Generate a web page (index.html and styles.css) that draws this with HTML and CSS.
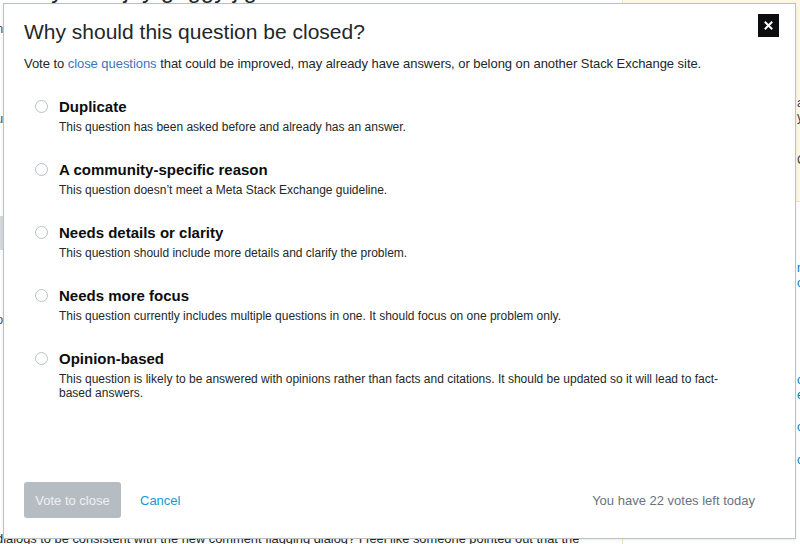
FILE: index.html
```html
<!DOCTYPE html>
<html lang="en">
<head>
<meta charset="utf-8">
<title>Why should this question be closed?</title>
<link rel="stylesheet" href="styles.css">
</head>
<body>
<div class="page">
  <div class="main">
    <div class="q-head">Do you enjoy gaggy jig</div>
    <div class="q-body">
      <p class="frag">h</p>
      <p class="frag">i</p>
      <p class="frag">u</p>
      <div class="frag-box"></div>
      <p class="frag frag-low">o</p>
    </div>
    <p class="tail">dialogs to be consistent with the new comment flagging dialog? I feel like someone pointed out that the</p>
  </div>
  <aside class="side">
    <div class="side-note">
      <p>gaging ways to get highlighted quickly</p>
      <p>a</p>
      <p>y</p>
      <p class="side-c">C</p>
    </div>
    <ul class="side-links">
      <li>n</li>
      <li>o</li>
      <li>o</li>
      <li>e</li>
      <li>o</li>
      <li>c</li>
    </ul>
  </aside>
</div>

<div class="modal" role="dialog" aria-labelledby="modal-title">
  <h1 class="modal-title" id="modal-title">Why should this question be closed?</h1>
  <button class="modal-close" aria-label="Close">
    <svg width="9" height="9" viewBox="0 0 9 9" aria-hidden="true"><path d="M1.5 1.5 L7.5 7.5 M7.5 1.5 L1.5 7.5" stroke="#fff" stroke-width="2" stroke-linecap="square"/></svg>
  </button>
  <p class="modal-desc">Vote to <a class="link" href="#">close questions</a> that could be improved, may already have answers, or belong on another Stack Exchange site.</p>

  <ul class="reasons">
    <li class="reason">
      <span class="radio"></span>
      <div class="reason-text">
        <div class="reason-label">Duplicate</div>
        <div class="reason-desc">This question has been asked before and already has an answer.</div>
      </div>
    </li>
    <li class="reason">
      <span class="radio"></span>
      <div class="reason-text">
        <div class="reason-label">A community-specific reason</div>
        <div class="reason-desc">This question doesn’t meet a Meta Stack Exchange guideline.</div>
      </div>
    </li>
    <li class="reason">
      <span class="radio"></span>
      <div class="reason-text">
        <div class="reason-label">Needs details or clarity</div>
        <div class="reason-desc">This question should include more details and clarify the problem.</div>
      </div>
    </li>
    <li class="reason">
      <span class="radio"></span>
      <div class="reason-text">
        <div class="reason-label">Needs more focus</div>
        <div class="reason-desc">This question currently includes multiple questions in one. It should focus on one problem only.</div>
      </div>
    </li>
    <li class="reason">
      <span class="radio"></span>
      <div class="reason-text">
        <div class="reason-label">Opinion-based</div>
        <div class="reason-desc">This question is likely to be answered with opinions rather than facts and citations. It should be updated so it will lead to fact-based answers.</div>
      </div>
    </li>
  </ul>

  <div class="modal-footer">
    <button class="btn-vote" disabled>Vote to close</button>
    <a class="btn-cancel" href="#">Cancel</a>
    <span class="votes-left">You have 22 votes left today</span>
  </div>
</div>
</body>
</html>
```

FILE: styles.css
```css
* { box-sizing: border-box; }

html, body {
  margin: 0;
  padding: 0;
  width: 800px;
  height: 544px;
  overflow: hidden;
  background: #ffffff;
  font-family: "Liberation Sans", Arial, sans-serif;
  color: #242729;
}

/* ---------- underlying page ---------- */
.page {
  display: flex;
  height: 544px;
}

.main {
  flex: none;
  width: 622px;
  display: flex;
  flex-direction: column;
  height: 544px;
}

.q-head {
  font-size: 24px;
  line-height: 28px;
  margin-top: -24px;
  padding-left: 14px;
  color: #242729;
  white-space: nowrap;
}

.q-body {
  flex: 1;
  padding-top: 17px;
  margin-left: -4px;
  font-size: 13px;
  line-height: 15px;
  color: #555;
}

.frag { margin: 0 0 30px 0; }

.frag-box {
  width: 10px;
  height: 34px;
  margin-top: 90px;
  background: #d6d9dc;
}

.frag-low { margin-top: 62px; }

.tail {
  margin: 0 0 -4px -4px;
  font-size: 12.85px;
  line-height: 18px;
  white-space: nowrap;
  color: #242729;
}

.side {
  flex: 1;
  min-width: 0;
  border-left: 1px solid #f1e5bc;
}

.side-note {
  background: #fdf7e3;
  border-bottom: 1px solid #f1e5bc;
  margin-top: -40px;
  height: 242px;
  padding: 4px 0 0 174px;
  font-size: 12px;
  line-height: 14px;
  color: #3b4045;
}

.side-note p { margin: 0; white-space: nowrap; }
.side-note p:first-child { margin-left: -160px; margin-bottom: 118px; }
.side-c { margin-top: 29px !important; }

.side-links {
  list-style: none;
  margin: 0;
  padding: 59px 0 0 174px;
  font-size: 12px;
  line-height: 15px;
  color: #0077cc;
}

.side-links li:nth-child(2) { margin-bottom: 82px; }
.side-links li:nth-child(4) { margin-bottom: 17px; }
.side-links li:nth-child(5) { margin-bottom: 18px; }

/* ---------- modal ---------- */
.modal {
  position: absolute;
  left: 3px;
  top: 3px;
  width: 793px;
  height: 536px;
  background: #ffffff;
  border: 1px solid #bbc0c4;
  box-shadow: 0 1px 3px rgba(0, 0, 0, 0.08);
  display: flex;
  flex-direction: column;
  padding: 15px 40px 20px 20px;
}

.modal-title {
  margin: 0;
  font-size: 21px;
  line-height: 26px;
  font-weight: normal;
  color: #242729;
}

.modal-close {
  position: absolute;
  top: 10px;
  right: 16px;
  width: 21px;
  height: 23px;
  border: 0;
  padding: 0;
  background: #0c0d0e;
  display: flex;
  align-items: center;
  justify-content: center;
}

.modal-desc {
  margin: 10px 0 0 0;
  font-size: 13px;
  line-height: 17px;
  color: #242729;
  white-space: nowrap;
  letter-spacing: -0.05px;
}

.link {
  color: #3d72c6;
  text-decoration: none;
}

.reasons {
  list-style: none;
  margin: 25px 0 0 0;
  padding: 0 0 0 11px;
  display: flex;
  flex-direction: column;
  gap: 26px;
}

.reason {
  display: flex;
  align-items: flex-start;
  gap: 11px;
}

.radio {
  flex: none;
  width: 13px;
  height: 13px;
  margin-top: 3px;
  border: 1px solid #bbc0c4;
  border-radius: 50%;
  background: #fff;
}

.reason-label {
  font-size: 15px;
  line-height: 19px;
  font-weight: bold;
  color: #0c0d0e;
}

.reason-desc {
  margin-top: 4px;
  font-size: 12px;
  line-height: 14px;
  color: #242729;
  max-width: 660px;
}

.modal-footer {
  margin-top: auto;
  display: flex;
  align-items: center;
}

.btn-vote {
  width: 97px;
  height: 36px;
  border: 0;
  border-radius: 3px;
  background: #b6bdc2;
  color: #eef0f1;
  font-family: "Liberation Sans", Arial, sans-serif;
  font-size: 13px;
  padding: 0;
}

.btn-cancel {
  margin-left: 19px;
  font-size: 13px;
  color: #1a98d5;
  text-decoration: none;
}

.votes-left {
  margin-left: auto;
  font-size: 13px;
  color: #6a737c;
}
```
